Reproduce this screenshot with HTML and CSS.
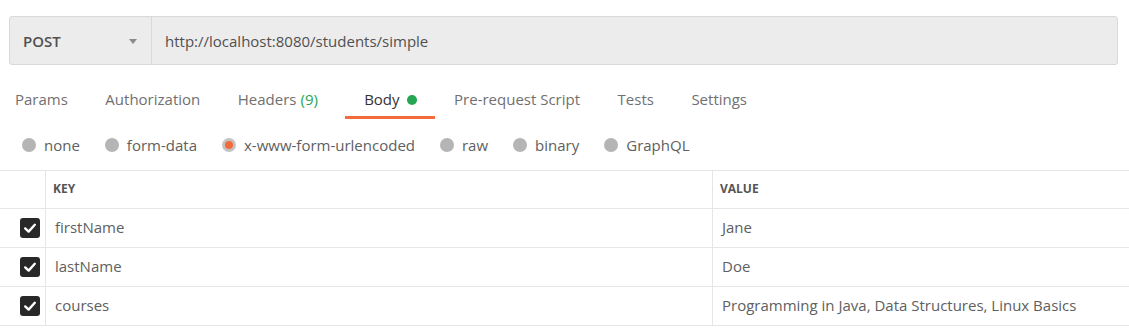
FILE: index.html
```html
<!DOCTYPE html>
<html>
<head>
<meta charset="utf-8">
<link rel="stylesheet" href="styles.css">
</head>
<body>
<div class="request-bar">
  <div class="method">
    <span class="method-name">POST</span>
    <span class="caret"></span>
  </div>
  <div class="url">http://localhost:8080/students/simple</div>
</div>

<div class="tabs">
  <div class="tab">Params</div>
  <div class="tab">Authorization</div>
  <div class="tab headers">Headers <span class="count">(9)</span></div>
  <div class="tab active">Body <span class="dot"></span></div>
  <div class="tab">Pre-request Script</div>
  <div class="tab">Tests</div>
  <div class="tab">Settings</div>
</div>

<div class="body-types">
  <label class="radio"><span class="circle"></span>none</label>
  <label class="radio"><span class="circle"></span>form-data</label>
  <label class="radio selected"><span class="circle"></span>x-www-form-urlencoded</label>
  <label class="radio"><span class="circle"></span>raw</label>
  <label class="radio"><span class="circle"></span>binary</label>
  <label class="radio"><span class="circle"></span>GraphQL</label>
</div>

<div class="kv-table">
  <div class="cell head check-col"></div>
  <div class="cell head">KEY</div>
  <div class="cell head last">VALUE</div>

  <div class="cell check-col"><span class="checkbox"><svg viewBox="0 0 20 20" width="20" height="20"><path d="M5.2 10.4 L8.6 13.6 L14.8 6.8" fill="none" stroke="#fff" stroke-width="2.4" stroke-linecap="round" stroke-linejoin="round"/></svg></span></div>
  <div class="cell">firstName</div>
  <div class="cell last">Jane</div>

  <div class="cell check-col"><span class="checkbox"><svg viewBox="0 0 20 20" width="20" height="20"><path d="M5.2 10.4 L8.6 13.6 L14.8 6.8" fill="none" stroke="#fff" stroke-width="2.4" stroke-linecap="round" stroke-linejoin="round"/></svg></span></div>
  <div class="cell">lastName</div>
  <div class="cell last">Doe</div>

  <div class="cell check-col"><span class="checkbox"><svg viewBox="0 0 20 20" width="20" height="20"><path d="M5.2 10.4 L8.6 13.6 L14.8 6.8" fill="none" stroke="#fff" stroke-width="2.4" stroke-linecap="round" stroke-linejoin="round"/></svg></span></div>
  <div class="cell">courses</div>
  <div class="cell last">Programming in Java, Data Structures, Linux Basics</div>
</div>
</body>
</html>
```
FILE: styles.css
```css
html, body {
  margin: 0;
  padding: 0;
  background: #ffffff;
}
body {
  font-family: "Open Sans", "Liberation Sans", sans-serif;
  font-size: 15px;
  color: #505050;
  width: 1129px;
  height: 328px;
  overflow: hidden;
}

.request-bar {
  display: flex;
  margin: 16px 11px 0 9px;
  height: 47px;
  background: #ececec;
  border: 1px solid #d9d9d9;
  border-radius: 3px;
}
.method {
  width: 142px;
  border-right: 1px solid #d9d9d9;
  display: flex;
  align-items: center;
  justify-content: space-between;
  padding: 0 14px 0 13px;
  box-sizing: border-box;
}
.method-name {
  font-weight: 600;
  color: #505050;
  font-size: 15px;
}
.caret {
  width: 0;
  height: 0;
  border-left: 4.5px solid transparent;
  border-right: 4.5px solid transparent;
  border-top: 5px solid #8a8a8a;
  margin-top: 1px;
}
.url {
  display: flex;
  align-items: center;
  padding-left: 13px;
  color: #505050;
  font-size: 15px;
}

.tabs {
  display: flex;
  margin: 16px 0 0 -3.75px;
}
.tab {
  padding: 8px 18.75px 6px;
  line-height: 21px;
  border-bottom: 3px solid transparent;
  color: #707070;
  display: flex;
  align-items: center;
  white-space: nowrap;
}
.tab.headers {
  padding-right: 27.5px;
}
.tab .count {
  color: #26a552;
  margin-left: 4px;
}
.tab.active {
  color: #333333;
  border-bottom-color: #f26b3a;
}
.dot {
  width: 10px;
  height: 10px;
  border-radius: 50%;
  background: #26a552;
  margin-left: 7px;
  margin-top: 1px;
}

.body-types {
  display: flex;
  align-items: center;
  height: 51px;
  padding-left: 22px;
  gap: 25px;
}
.radio {
  display: flex;
  align-items: center;
  gap: 8px;
  color: #606060;
  white-space: nowrap;
}
.circle {
  width: 14px;
  height: 14px;
  border-radius: 50%;
  background: #b5b5b5;
  box-sizing: border-box;
}
.radio.selected .circle {
  background: #f26b3a;
  border: 3px solid #c4c4c4;
}

.kv-table {
  display: grid;
  grid-template-columns: 46px 667px 1fr;
  border-top: 1px solid #e6e6e6;
}
.cell {
  height: 36px;
  padding-bottom: 2px;
  border-bottom: 1px solid #e6e6e6;
  border-right: 1px solid #e6e6e6;
  box-sizing: content-box;
  display: flex;
  align-items: center;
  padding-left: 9px;
  color: #606060;
  font-size: 15px;
  white-space: nowrap;
}
.cell.last {
  border-right: none;
}
.cell.head {
  height: 35px;
  font-size: 12px;
  font-weight: 700;
  color: #555555;
  padding-left: 7px;
}
.check-col {
  padding-left: 0;
  justify-content: flex-end;
  padding-right: 5px;
}
.cell.head.check-col {
  padding-left: 0;
}
.checkbox {
  width: 20px;
  height: 20px;
  border-radius: 3px;
  background: #282828;
  display: flex;
  margin-top: 2px;
}
```
